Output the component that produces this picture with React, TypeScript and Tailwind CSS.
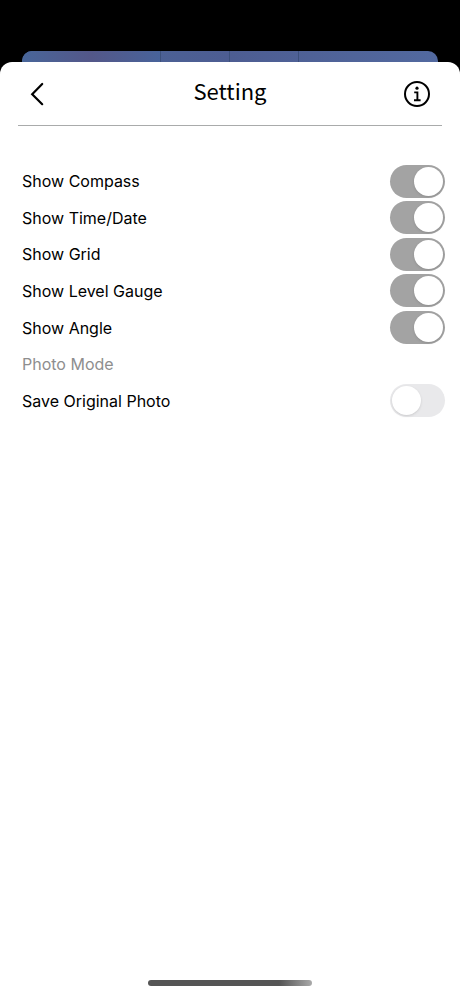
import { useState } from "react";

const initialOptions = [
  { id: "compass", label: "Show Compass", on: true },
  { id: "time", label: "Show Time/Date", on: true },
  { id: "grid", label: "Show Grid", on: true },
  { id: "level", label: "Show Level Gauge", on: true },
  { id: "angle", label: "Show Angle", on: true },
  { id: "mode", label: "Photo Mode", on: null },
  { id: "original", label: "Save Original Photo", on: false },
];

type ToggleProps = {
  id: string;
  checked: boolean;
  onChange: (checked: boolean) => void;
};

const Toggle = ({ id, checked, onChange }: ToggleProps) => {
  return (
    <input
      id={id}
      type="checkbox"
      role="switch"
      checked={checked}
      onChange={(e) => onChange(e.target.checked)}
      className="flex h-[33px] w-[55px] shrink-0 cursor-pointer appearance-none items-center rounded-full bg-[#e9e9eb] px-0.5 before:size-[29px] before:rounded-full before:bg-white before:shadow-sm checked:justify-end checked:bg-[#a3a3a3]"
    />
  );
};

const Header = () => {
  return (
    <header className="mx-[18px] grid h-16 grid-cols-[1fr_auto_1fr] items-center border-b border-[#a9abab] pr-[11px] pl-[5px]">
      <button type="button" aria-label="Back" className="flex size-7 items-center justify-center">
        <svg
          width="28"
          height="28"
          viewBox="0 0 28 28"
          fill="none"
          stroke="#000"
          strokeWidth="2.2"
          strokeLinecap="round"
        >
          <path d="M19.2 4 9.2 14.2 19.2 24.2" />
        </svg>
      </button>
      <h1 className="ml-1.5 pb-2 font-['Noto_Sans_CJK_KR','Noto_Sans',sans-serif] text-[22px] leading-7 font-normal text-black">
        Setting
      </h1>
      <button
        type="button"
        aria-label="Information"
        className="flex size-7 items-center justify-center justify-self-end"
      >
        <svg width="28" height="28" viewBox="0 0 28 28" fill="none" stroke="#000">
          <circle cx="14" cy="14" r="12" strokeWidth="2" />
          <circle cx="14" cy="8.2" r="1.6" fill="#000" stroke="none" />
          <path d="M11.2 12.4H14.4V20M11 20.2H17.6" strokeWidth="1.9" />
        </svg>
      </button>
    </header>
  );
};

export default function App() {
  const [options, setOptions] = useState(initialOptions);

  const setOption = (id: string, on: boolean) => {
    setOptions(options.map((o) => (o.id === id ? { ...o, on } : o)));
  };

  return (
    <div className="flex min-h-screen flex-col bg-black pt-[51px] font-['Inter','Liberation_Sans',sans-serif]">
      {/* top edge of the screen underneath the sheet */}
      <div className="mx-[22px] grid h-[11px] grid-cols-[138fr_69fr_69fr_138fr] divide-x divide-[#3c507c] overflow-hidden rounded-t-[10px] bg-linear-to-r from-[#48669a] via-[#4d5d92] to-[#52699f]">
        <div className="bg-linear-to-r from-[#48669a] via-[#535789] to-[#48639a]" />
        <div />
        <div />
        <div />
      </div>
      <main className="flex grow flex-col rounded-t-xl bg-white">
        <Header />
        <ul className="mt-[37px] grid min-h-64 auto-rows-fr pr-[15px] pl-[22px]">
          {options.map(({ id, label, on }) => (
            <li key={id} className="flex items-center justify-between text-base">
              {on === null ? (
                <span className="text-[#8e8e8e]">{label}</span>
              ) : (
                <>
                  <label htmlFor={id} className="text-black">
                    {label}
                  </label>
                  <Toggle id={id} checked={on} onChange={(value) => setOption(id, value)} />
                </>
              )}
            </li>
          ))}
        </ul>
        <div className="mx-auto mt-auto mb-[9px] h-1.5 w-[164px] rounded-full bg-linear-to-r from-[#555] from-80% to-[#aaa]" />
      </main>
    </div>
  );
}
